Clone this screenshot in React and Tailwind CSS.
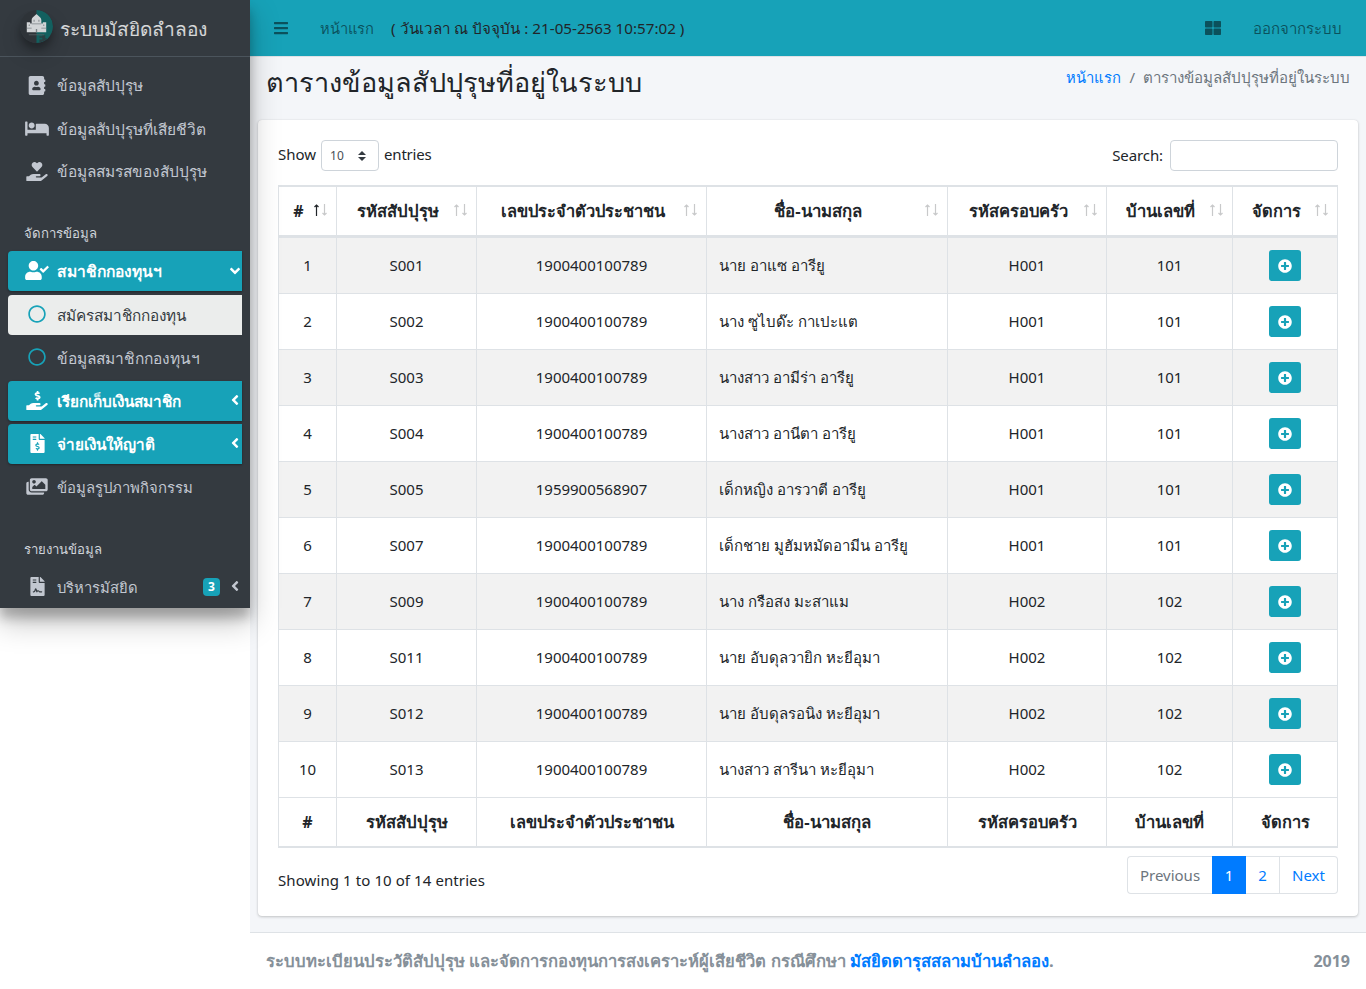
import React from "react";
import {
  FaAddressBook, FaBed, FaHandHoldingHeart, FaUserCheck, FaHandHoldingUsd,
  FaFileInvoiceDollar, FaImages, FaFileContract, FaAngleLeft, FaAngleDown,
  FaThLarge, FaBars, FaPlusCircle, FaRegCircle,
} from "react-icons/fa";

const columns = [
  { label: "#", width: "w-[58px]", size: "text-base" },
  { label: "รหัสสัปปุรุษ", width: "w-[140px]", size: "text-[16.600px]" },
  { label: "เลขประจำตัวประชาชน", width: "w-[230px]", size: "text-[16.400px]" },
  { label: "ชื่อ-นามสกุล", width: "w-[241px]", size: "text-[16.800px]" },
  { label: "รหัสครอบครัว", width: "w-[159px]", size: "text-[16.500px]" },
  { label: "บ้านเลขที่", width: "w-[126px]", size: "text-[16.600px]" },
  { label: "จัดการ", width: "w-[104px]", size: "text-[16.400px]" },
];

const rows = [
  ["1", "S001", "1900400100789", "นาย อาแซ อารียู", "H001", "101"],
  ["2", "S002", "1900400100789", "นาง ซูไบด๊ะ กาเปะแต", "H001", "101"],
  ["3", "S003", "1900400100789", "นางสาว อามีร่า อารียู", "H001", "101"],
  ["4", "S004", "1900400100789", "นางสาว อานีตา อารียู", "H001", "101"],
  ["5", "S005", "1959900568907", "เด็กหญิง อารวาตี อารียู", "H001", "101"],
  ["6", "S007", "1900400100789", "เด็กชาย มูฮัมหมัดอามีน อารียู", "H001", "101"],
  ["7", "S009", "1900400100789", "นาง กรือสง มะสาแม", "H002", "102"],
  ["8", "S011", "1900400100789", "นาย อับดุลวายิก หะยีอุมา", "H002", "102"],
  ["9", "S012", "1900400100789", "นาย อับดุลรอนิง หะยีอุมา", "H002", "102"],
  ["10", "S013", "1900400100789", "นางสาว สารีนา หะยีอุมา", "H002", "102"],
];

function Logo() {
  return (
    <svg className="h-[33px] w-[33px] shrink-0 rounded-full shadow-[0_10px_20px_rgba(0,0,0,0.19),0_6px_6px_rgba(0,0,0,0.23)]" viewBox="0 0 34 34">
      <circle cx="17" cy="17" r="17" fill="#2e3338" />
      <path d="M17 0a17 17 0 0 1 0 34z" fill="#12605f" />
      <path d="M20 27h3v-1h3v3h2l-3 3-5 1.500v-3h3v-2h-3z" fill="#2a3f43" />
      <path d="M17 4c.8 1.500 5 3 5 6.500v3.500h1.500v-1.500h3.500V23H7V12.500h3.500V14H12v-3.500C12 7 16.200 5.500 17 4z" fill="#d2d5d7" />
      <path d="M14 10h1v2h-1zM19 10h1v2h-1zM9 15h1v1.500H9zM24 15h1v1.500h-1zM16.300 19.500h1.400V23h-1.400zM7 18.300h5v.7H7zM22 18.300h5v.7h-5zM12 14h10v.6H12z" fill="#7d8387" />
      <path d="M9 25.500h16" stroke="#596165" strokeWidth=".8" />
    </svg>
  );
}

function NavItem({ icon: Icon, size, label, kind = "plain", arrow: Arrow, badge, text = "text-[15.400px]" }) {
  const kinds = {
    plain: "text-[#c2c7d0]",
    sub: "text-[#c2c7d0]",
    active: "bg-[#17a2b8] font-bold text-white shadow-[0_1px_3px_rgba(0,0,0,0.12),0_1px_2px_rgba(0,0,0,0.24)]",
    light: "bg-[#ebedec] text-[#343a40]",
  };
  const ring = kind === "sub" || kind === "light" ? "text-[#17a2b8]" : "";
  return (
    <li className={"flex h-10 shrink-0 items-center rounded-l-[4px] pl-4 " + kinds[kind]}>
      <span className={"flex w-[26px] shrink-0 justify-center pb-0.5 " + ring}>
        <Icon className={size} />
      </span>
      <span className={"ml-[7px] whitespace-nowrap " + text}>{label}</span>
      {badge && (
        <span className="ml-auto flex h-[18px] w-[17px] items-center justify-center rounded bg-[#17a2b8] text-xs font-bold text-white">{badge}</span>
      )}
      {Arrow && <Arrow className={badge ? "ml-[7px] -mr-px mb-0.5 h-4 w-4" : Arrow === FaAngleDown ? "-mr-px ml-auto h-4 w-4" : "-mr-px mb-0.5 ml-auto h-4 w-4"} />}
    </li>
  );
}

function Sidebar() {
  return (
    <aside className="relative z-10 h-[608px] w-[250px] shrink-0 bg-[#343a40] shadow-[0_14px_28px_rgba(0,0,0,0.25),0_10px_10px_rgba(0,0,0,0.22)]">
      <div className="flex h-[57px] items-start border-b border-[#4b545c] pl-5 pt-[10px]">
        <Logo />
        <span className="ml-[7px] whitespace-nowrap pt-[7px] text-[19.100px] font-medium text-white/80">ระบบมัสยิดลำลอง</span>
      </div>
      <ul className="flex flex-col pl-2 pr-2 pt-[9px]">
        <div className="flex flex-col gap-[3px]">
          <NavItem icon={FaAddressBook} size="h-[19px] w-[18px]" label="ข้อมูลสัปปุรุษ" />
          <NavItem icon={FaBed} size="h-[19px] w-[24px]" label="ข้อมูลสัปปุรุษที่เสียชีวิต" text="text-[15.500px]" />
          <NavItem icon={FaHandHoldingHeart} size="h-[19px] w-[22px]" label="ข้อมูลสมรสของสัปปุรุษ" />
          <li className="flex h-[53px] items-end px-4 pb-[3px] text-[13.200px] font-medium text-[#d0d4db]">จัดการข้อมูล</li>
          <NavItem icon={FaUserCheck} size="h-[19px] w-[24px]" label="สมาชิกกองทุนฯ" kind="active" arrow={FaAngleDown} text="text-[15.600px]" />
        </div>
        <div className="mt-1 flex flex-col gap-[3px]">
          <NavItem icon={FaRegCircle} size="h-[18px] w-[18px]" label="สมัครสมาชิกกองทุน" kind="light" text="text-[15.300px]" />
          <NavItem icon={FaRegCircle} size="h-[18px] w-[18px]" label="ข้อมูลสมาชิกกองทุนฯ" kind="sub" text="text-[15.500px]" />
          <NavItem icon={FaHandHoldingUsd} size="h-[19px] w-[22px]" label="เรียกเก็บเงินสมาชิก" kind="active" arrow={FaAngleLeft} text="text-[15.300px]" />
          <NavItem icon={FaFileInvoiceDollar} size="h-[19px] w-[19px]" label="จ่ายเงินให้ญาติ" kind="active" arrow={FaAngleLeft} text="text-[15.300px]" />
          <NavItem icon={FaImages} size="h-[19px] w-[22px]" label="ข้อมูลรูปภาพกิจกรรม" text="text-[14.900px]" />
          <li className="flex h-[54px] items-end px-4 pb-[3px] text-[13.200px] font-medium text-[#d0d4db]">รายงานข้อมูล</li>
          <NavItem icon={FaFileContract} size="h-[19px] w-[19px]" label="บริหารมัสยิด" badge="3" arrow={FaAngleLeft} text="text-[14.800px]" />
        </div>
      </ul>
    </aside>
  );
}

function SortMark({ active }) {
  return (
    <svg className="mb-0.5 h-3 w-[15px] shrink-0" viewBox="0 0 15 12" fill="none">
      <path d="M3.500 12V1M1.500 3L3.500 1L5.500 3" stroke={active ? "#212529" : "#c8c9ca"} strokeWidth="1.200" />
      <path d="M11.500 0v11M9.500 9l2 2L13.500 9" stroke="#c8c9ca" strokeWidth="1.200" />
    </svg>
  );
}

function DataTable() {
  return (
    <table className="w-[1060px] table-fixed border-separate border-spacing-0 border border-[#dee2e6]">
      <thead>
        <tr className="h-[51px]">
          {columns.map((c, i) => (
            <th key={c.label} className={"border-b-2 border-r border-t border-[#dee2e6] p-0 font-bold last:border-r-0 " + c.width}>
              <div className="flex items-center pr-2">
                <span className={"grow whitespace-nowrap pl-[5px] text-center " + c.size}>{c.label}</span>
                <SortMark active={i === 0} />
              </div>
            </th>
          ))}
        </tr>
      </thead>
      <tbody>
        {rows.map((r) => (
          <tr key={r[0]} className="h-14 odd:bg-[#f2f2f2]">
            {r.map((v, i) => (
              <td key={i} className={"whitespace-nowrap border-r border-t border-[#dee2e6] pb-0.5 pt-0 " + (i === 3 ? "px-3 tracking-[0.03px]" : "px-0 text-center")}>{v}</td>
            ))}
            <td className="border-t border-[#dee2e6] p-0">
              <button className="mx-auto flex h-[31px] w-8 items-center justify-center rounded-[3px] bg-[#17a2b8] text-white">
                <FaPlusCircle className="h-3.5 w-3.5" />
              </button>
            </td>
          </tr>
        ))}
      </tbody>
      <tfoot>
        <tr className="h-[50px]">
          {columns.map((c) => (
            <th key={c.label} className={"whitespace-nowrap border-b border-r border-t border-[#dee2e6] p-0 text-center font-bold last:border-r-0 " + c.size}>{c.label}</th>
          ))}
        </tr>
      </tfoot>
    </table>
  );
}

export default function App() {
  return (
    <div className="flex h-[989px] w-[1366px] overflow-hidden bg-white font-['Noto_Sans','Open_Sans',sans-serif] text-[15px] leading-6 text-[#212529]">
      <Sidebar />
      <div className="flex w-[1116px] flex-col">
        <header className="flex h-[57px] shrink-0 items-center border-b border-[#dee2e6] bg-[#17a2b8] px-6">
          <FaBars className="h-4 w-[14px] text-black/50" />
          <span className="ml-8 text-[14.700px] text-black/50">หน้าแรก</span>
          <span className="ml-[17px] whitespace-nowrap text-[15.200px]">( วันเวลา ณ ปัจจุบัน : 21-05-2563 10:57:02 )</span>
          <FaThLarge className="ml-auto h-4 w-4 text-black/50" />
          <span className="ml-8 text-black/50">ออกจากระบบ</span>
        </header>
        <main className="flex h-[875px] shrink-0 flex-col bg-[#f4f6f9]">
          <div className="flex h-[63px] justify-between px-4">
            <h1 className="whitespace-nowrap pt-[7px] text-[27.100px] leading-9">ตารางข้อมูลสัปปุรุษที่อยู่ในระบบ</h1>
            <div className="flex gap-2 whitespace-nowrap pt-2 text-[#6c757d]">
              <a className="text-[14.800px] text-[#007bff]">หน้าแรก</a><span>/</span><span className="text-[15.100px]">ตารางข้อมูลสัปปุรุษที่อยู่ในระบบ</span>
            </div>
          </div>
          <section className="mx-2 flex h-[796px] flex-col rounded bg-white px-5 pt-5 shadow-[0_0_1px_rgba(0,0,0,0.125),0_1px_3px_rgba(0,0,0,0.2)]">
            <div className="flex h-[45px] items-start justify-between">
              <div className="flex h-[31px] items-center">
                <span className="pb-[3px]">Show</span>
                <span className="mx-[5px] flex h-[31px] w-[58px] items-center justify-between rounded border border-[#ced4da] pl-2 pr-3 text-xs text-[#495057]">
                  10
                  <svg className="h-2.5 w-2" viewBox="0 0 8 10" fill="#343a40"><path d="M4 0l4 4H0zM4 10L0 6h8z" /></svg>
                </span>
                <span className="pb-[3px] tracking-[-0.2px]">entries</span>
              </div>
              <label className="flex h-[31px] items-center"><span className="pb-0.5 tracking-[-0.1px]">Search:</span>
                <input className="ml-[7px] h-[31px] w-[168px] rounded border border-[#ced4da] bg-white" />
              </label>
            </div>
            <DataTable />
            <div className="flex justify-between pt-2">
              <span className="pt-3 tracking-[0.09px]">Showing 1 to 10 of 14 entries</span>
              <div className="flex h-[38px] text-[#007bff]">
                <span className="flex w-[85px] items-center justify-center rounded-l border border-r-0 border-[#dee2e6] text-[#6c757d]">Previous</span>
                <span className="flex w-[34px] items-center justify-center bg-[#007bff] text-white">1</span>
                <span className="flex w-[34px] items-center justify-center border-y border-r border-[#dee2e6]">2</span>
                <span className="flex w-[58px] items-center justify-center rounded-r border border-l-0 border-[#dee2e6]">Next</span>
              </div>
            </div>
          </section>
        </main>
        <footer className="flex h-[57px] items-center justify-between whitespace-nowrap border-t border-[#dee2e6] bg-white px-4 text-base font-bold text-[#869099]">
          <span className="text-[16.620px]">ระบบทะเบียนประวัติสัปปุรุษ และจัดการกองทุนการสงเคราะห์ผู้เสียชีวิต กรณีศึกษา <a className="text-[#007bff]">มัสยิดดารุสสลามบ้านลำลอง</a>.</span>
          <span>2019</span>
        </footer>
      </div>
    </div>
  );
}
